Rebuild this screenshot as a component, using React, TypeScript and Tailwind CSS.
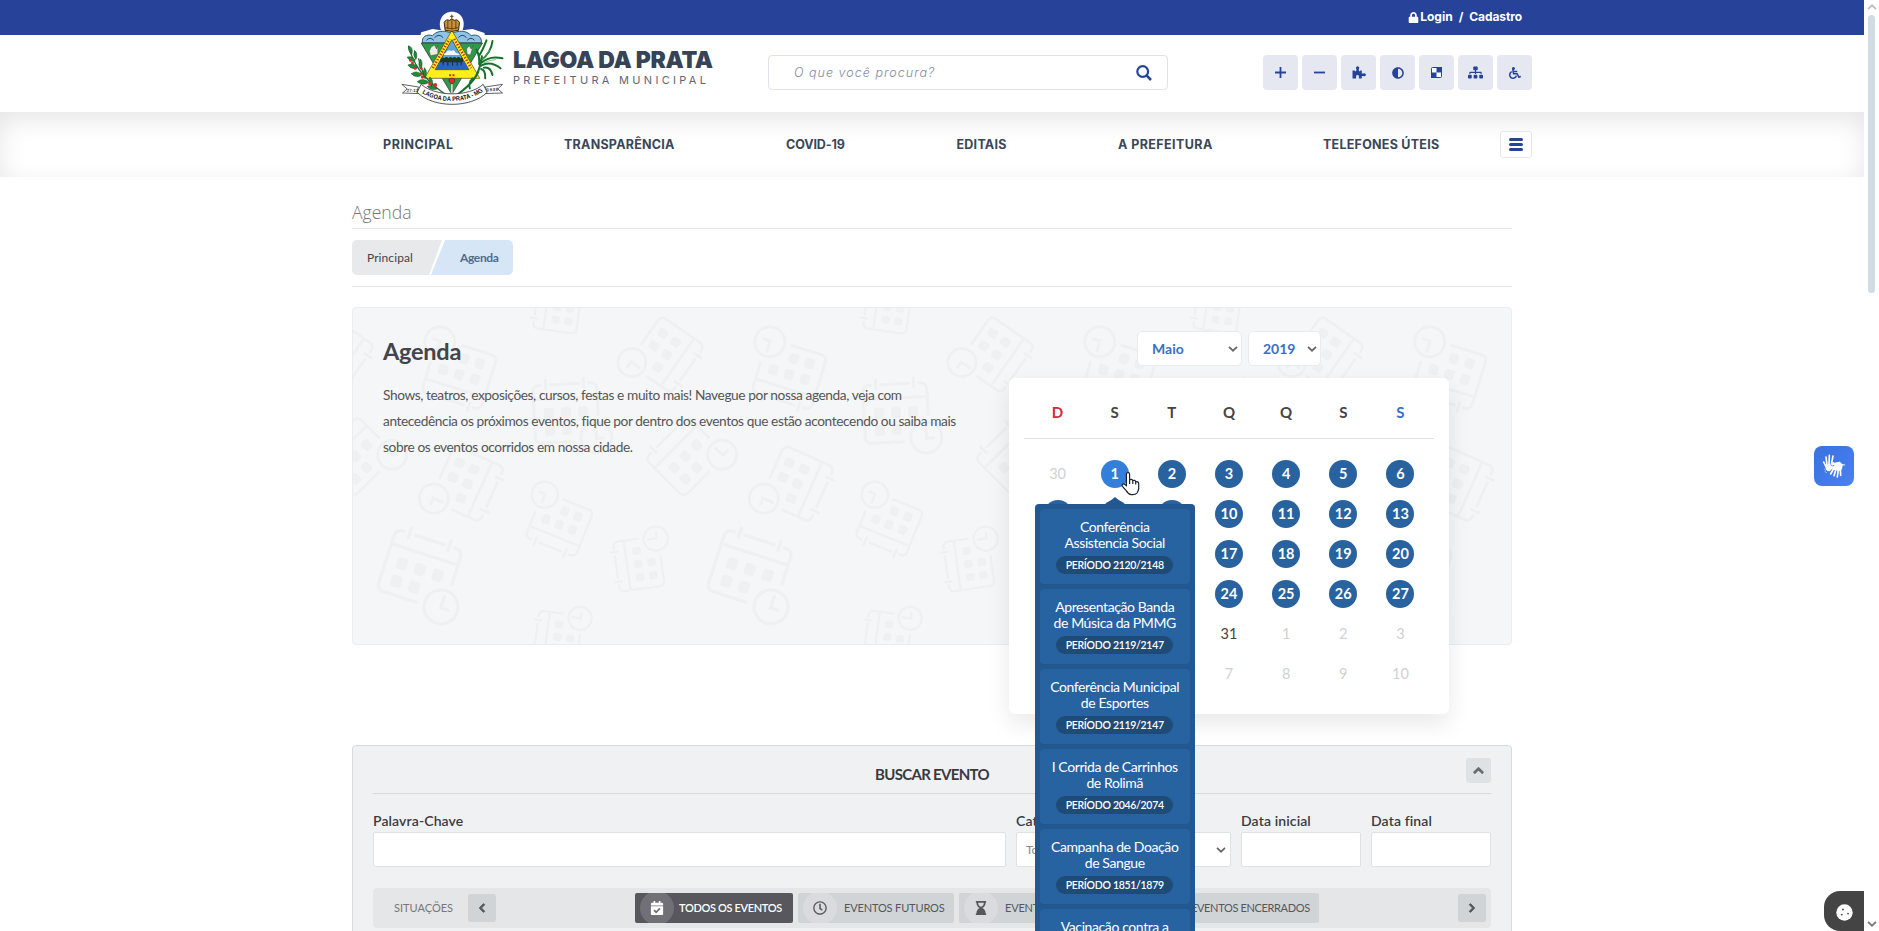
import React from 'react';
import { FaLock, FaAdjust, FaSitemap, FaWheelchair, FaChevronLeft, FaChevronRight, FaChevronUp, FaRegClock, FaHourglassEnd, FaHourglassHalf, FaCalendarCheck } from 'react-icons/fa';

function Crest() {
  return (
    <svg className="block h-[94px] w-[103px]" viewBox="186 34 308 282">
      <path d="M338 36 C365 36 382 62 370 92 L400 88 L436 100 L440 130 L440 200 L240 200 L238 130 L246 98 L280 88 L306 92 C294 62 312 36 338 36Z" fill="#fff" />
      <path d="M250 130 C246 112 262 102 280 108 C292 94 312 92 330 98 L346 98 C366 92 384 94 396 108 C414 102 430 112 426 130Z" fill="#8fc4e6" stroke="#33566f" strokeWidth="3" />
      <path d="M262 122 q10 -12 22 0 m2 -8 q14 -14 26 0 m94 8 q-10 -12 -22 0 m-2 -8 q-14 -14 -24 0" fill="none" stroke="#23485f" strokeWidth="3" />
      <path d="M246 130 L430 130 L338 284Z" fill="#2f9a48" stroke="#222" strokeWidth="2" />
      <path d="M276 142 l10 -6 6 12 4 -10 v26 l-22 4 -4 -14Z M382 148 l8 -10 6 10 6 -10 -8 28 -10 -2Z" fill="#e8eee4" stroke="#444" strokeWidth="1.5" />
      <path d="M338 92 L256 236 L422 236Z" fill="#fdf018" stroke="#4a4410" strokeWidth="2" />
      <path d="M338 120 L288 210 L389 210Z" fill="#5da4dc" stroke="#222" strokeWidth="2" />
      <path d="M320 160 q6 -12 16 -6 q10 -6 14 6 q10 0 12 6 h-48 q0 -6 6 -6Z" fill="#f2f8fb" />
      <path d="M302 186 L376 186 L388 209 L290 209Z" fill="#2b62c0" />
      <path d="M304 178 q6 -8 12 -2 q6 -8 12 0 q6 -8 12 0 q6 -8 12 0 q6 -8 12 0 q6 -6 8 4 v8 h-70Z" fill="#1e3a22" />
      <path d="M312 186 v10 m14 -10 v12 m14 -12 v12 m14 -12 v12 m12 -12 v10" stroke="#15241a" strokeWidth="2.5" />
      <path d="M281 205 L331 118 M345 118 L396 205" stroke="#cf2a22" strokeWidth="8" strokeDasharray="4 5" fill="none" />
      <path d="M330 227 h6 m4 0 h6" stroke="#cf2a22" strokeWidth="6" />
      <path d="M330 238 q8 -6 16 0 q4 8 -8 16 q-12 -8 -8 -16Z" fill="#df2b2b" stroke="#333" strokeWidth="2" />
      <path d="M338 254 V282" stroke="#d8d8d8" strokeWidth="5" />
      <path d="M338 45 v12 m-5 -7 h10" stroke="#5a3d0a" strokeWidth="3" />
      <path d="M318 92 L315 68 q6 -12 16 -6 q7 -8 14 0 q10 -6 16 6 L358 92 q-20 6 -40 0Z" fill="#c8923a" stroke="#3a260a" strokeWidth="3" />
      <path d="M326 64 v24 m12 -26 v28 m12 -26 v24 M318 84 q20 6 40 0" stroke="#5a3512" strokeWidth="2.5" fill="none" />
      <path d="M208 140 C222 190 244 230 318 284 M238 176 C244 200 250 220 262 236" fill="none" stroke="#176b2c" strokeWidth="4" />
      <path d="M208 138 q16 6 10 26 q-12 -8 -10 -26Z M204 172 q20 -4 24 12 q-16 4 -24 -12Z M226 152 q12 10 4 28 q-10 -12 -4 -28Z M206 196 q20 -8 30 8 q-18 8 -30 -8Z M244 178 q10 14 0 30 q-10 -14 0 -30Z M216 222 q18 -12 32 4 q-16 12 -32 -4Z M256 204 q12 14 0 30 q-8 -14 0 -30Z M234 246 q18 -14 36 2 q-18 12 -36 -2Z M272 232 q14 12 6 28 q-12 -10 -6 -28Z M264 260 q18 -8 30 8 q-18 6 -30 -8Z" fill="#1f8a3a" stroke="#0e4d1e" strokeWidth="1.5" />
      <g fill="#d92a2a">
        <circle cx="214" cy="182" r="4.5" /><circle cx="220" cy="190" r="4.5" /><circle cx="228" cy="206" r="4.5" /><circle cx="246" cy="206" r="4" /><circle cx="250" cy="232" r="5" /><circle cx="246" cy="222" r="4" /><circle cx="272" cy="252" r="5" /><circle cx="288" cy="256" r="6" />
      </g>
      <path d="M442 122 q-12 30 -22 46 M460 124 q-4 34 -34 58 M490 176 q-40 -10 -66 16 M484 206 q-30 -24 -58 -8 M460 226 q-6 -26 -26 -22 M438 236 q2 -24 -12 -28 M412 150 q10 18 8 44 M428 170 C420 230 400 250 356 284 M400 236 q-14 18 -8 30 M420 206 q-6 30 -26 38" fill="none" stroke="#15712c" strokeWidth="6" strokeLinecap="round" />
      <path d="M452 150 q-12 20 -24 30 M470 180 q-20 0 -36 10" fill="none" stroke="#5dbb5b" strokeWidth="2.5" />
      <path d="M188 254 L238 262 L234 274 L246 282 L190 280 L204 268Z M490 254 L438 262 L444 274 L430 282 L490 280 L476 268Z" fill="#fff" stroke="#444" strokeWidth="2.5" />
      <path d="M246 254 C290 292 390 292 432 254 L444 278 C396 326 282 326 234 278Z" fill="#fff" stroke="#333" strokeWidth="2.5" />
      <path id="motto" d="M244 276 C292 314 386 314 436 272" fill="none" />
      <text className="font-['Liberation_Sans'] text-[19px] font-bold" fill="#111">
        <textPath href="#motto" startOffset="6" textLength="194" lengthAdjust="spacingAndGlyphs">LAGOA DA PRATA - MG</textPath>
      </text>
      <text x="203" y="276" textLength="34" transform="rotate(3 203 276)" className="font-['Liberation_Sans'] text-[13px] font-bold" fill="#333">27-12</text>
      <text x="443" y="275" textLength="34" transform="rotate(-3 443 275)" className="font-['Liberation_Sans'] text-[13px] font-bold" fill="#333">1938</text>
    </svg>
  );
}

function Doodle({ x, y, w, r }: { x: number; y: number; w: number; r: number }) {
  return (
    <g transform={`translate(${x} ${y}) rotate(${r}) scale(${w / 64})`} fill="none" stroke="#eff0f2" strokeWidth="3" strokeLinecap="round">
      <path d="M32 4 V-22 a6 6 0 0 0 -6 -6 H24 M14 -28 H-14 M-24 -28 H-26 a6 6 0 0 0 -6 6 V24 a6 6 0 0 0 6 6 H6 M-32 -14 H32 M-19 -33 v9 M19 -33 v9" />
      <g fill="#eff0f2" stroke="none">
        <rect x="-22" y="-5" width="10" height="11" rx="3" /><rect x="-5" y="-5" width="10" height="11" rx="3" /><rect x="12" y="-5" width="10" height="11" rx="3" />
        <rect x="-22" y="12" width="10" height="11" rx="3" /><rect x="-5" y="12" width="10" height="11" rx="3" />
      </g>
      <circle cx="29" cy="27" r="15.5" />
      <path d="M29 17 V28 H36" />
    </g>
  );
}

const doodles = [
  { x: 106, y: 67, w: 62, r: 197 },
  { x: 204, y: 329, w: 48, r: -82 },
  { x: 204, y: -1, w: 48, r: -82 },
  { x: 314, y: 47, w: 58, r: 125 },
  { x: -16, y: 47, w: 58, r: 125 },
  { x: 213, y: 104, w: 64, r: -3 },
  { x: 332, y: 148, w: 60, r: -45 },
  { x: 2, y: 148, w: 60, r: -45 },
  { x: 115, y: 176, w: 60, r: 114 },
  { x: 206, y: 217, w: 54, r: 202 },
  { x: 285, y: 256, w: 50, r: -98 },
  { x: 67, y: 261, w: 70, r: 18 },
];

function Pattern() {
  return (
    <svg className="absolute inset-0 h-full w-full">
      <defs>
        <pattern id="agenda-tile" width="330" height="330" patternUnits="userSpaceOnUse">
          {doodles.map((d, i) => <Doodle key={i} {...d} />)}
        </pattern>
      </defs>
      <rect width="100%" height="100%" fill="url(#agenda-tile)" />
    </svg>
  );
}

function Caret({ className = 'text-[#666]' }: { className?: string }) {
  return (
    <svg className={`h-[6px] w-[10px] ${className}`} viewBox="0 0 10 6" fill="none" stroke="currentColor" strokeWidth="1.7">
      <path d="M1 .8 L5 4.7 L9 .8" />
    </svg>
  );
}

function Hands() {
  return (
    <svg className="h-10 w-10" viewBox="0 0 120 120" fill="none" stroke="#fff" strokeLinecap="round" strokeLinejoin="round">
      <path d="M36 62 L29 48 M39 58 L36 33 M45 56 L46 28 M52 56 L57 30" strokeWidth="5" />
      <path d="M36 60 L50 56 L58 50 L54 66 L46 74 Q36 74 36 60Z" fill="#fff" strokeWidth="4" />
      <path d="M34 77 l3 3 M32 70 l2 2" strokeWidth="2.5" />
      <path d="M60 66 L50 84 M66 70 L60 89 M73 70 L70 93 M79 68 L80 88" strokeWidth="5" />
      <path d="M50 58 L62 52 L76 49 L84 56 Q84 68 78 72 L60 70Z" fill="#fff" strokeWidth="4" />
      <path d="M84 56 L92 57 M56 62 L50 66" strokeWidth="3" />
      <path d="M50 57 Q56 62 60 59" stroke="#3d76e4" strokeWidth="2.5" />
    </svg>
  );
}

const tools = [
  <svg key="p" className="h-[11px] w-[11px]" viewBox="0 0 11 11" stroke="currentColor" strokeWidth="1.8"><path d="M5.5 0V11M0 5.5H11" /></svg>,
  <svg key="m" className="h-[11px] w-[11px]" viewBox="0 0 11 11" stroke="currentColor" strokeWidth="1.8"><path d="M0 5.5H11" /></svg>,
  <svg key="z" className="h-[13px] w-[14px]" viewBox="0 0 14 13" fill="currentColor"><path d="M0.5 4.6H2.6L3.4 5.4L4.4 4.4V3A1.6 1.6 0 1 1 6.8 3V4.4L7.6 5.4L8.4 4.6H9.8V7.6H11.4A1.5 1.5 0 1 1 11.4 10H9.8V12.5H6.9V10.5A1.4 1.4 0 0 0 4.1 10.5V12.5H.5Z" /></svg>,
  <FaAdjust key="a" size={12} />,
  <svg key="c" className="h-[11px] w-[11px]" viewBox="0 0 11 11"><rect x=".5" y=".5" width="10" height="10" rx="1" fill="#fff" stroke="currentColor" /><path d="M5.5 0H11V5.5H5.5ZM0 5.5H5.5V11H0Z" fill="currentColor" /></svg>,
  <FaSitemap key="s" size={15} />,
  <FaWheelchair key="w" size={12} />,
];

const nav = [
  { t: 'PRINCIPAL', c: 'w-[181px] tracking-[0.55px]' },
  { t: 'TRANSPARÊNCIA', c: 'w-[222px] tracking-[0.25px]' },
  { t: 'COVID-19', c: 'w-[170.5px] tracking-[-0.1px]' },
  { t: 'EDITAIS', c: 'w-[161.5px] tracking-[0.25px]' },
  { t: 'A PREFEITURA', c: 'w-[205px] tracking-[0.42px]' },
  { t: 'TELEFONES ÚTEIS', c: 'w-[176px] tracking-[0.25px]' },
];

const events = [
  ['Conferência', 'Assistencia Social', '2120/2148'],
  ['Apresentação Banda', 'de Música da PMMG', '2119/2147'],
  ['Conferência Municipal', 'de Esportes', '2119/2147'],
  ['I Corrida de Carrinhos', 'de Rolimã', '2046/2074'],
  ['Campanha de Doação', 'de Sangue', '1851/1879'],
  ['Vacinação contra a', 'Gripe', '1851/1879'],
];

const days: { n: number; k: 'out' | 'in' | 'ev' | 'hot' }[] = Array.from({ length: 42 }, (_, i) => {
  if (i === 0) return { n: 30, k: 'out' };
  if (i === 1) return { n: 1, k: 'hot' };
  if (i <= 28) return { n: i, k: 'ev' };
  if (i <= 31) return { n: i, k: 'in' };
  return { n: i - 31, k: 'out' };
});

const dayClass = {
  out: 'text-[#cfd1d3]',
  in: 'text-[#444]',
  ev: 'bg-[#28629f] font-bold text-white',
  hot: 'bg-[#347fd9] font-bold text-white',
};

function EventPopup() {
  return (
    <div className="absolute top-[44px] left-1/2 z-20 w-[160px] -translate-x-1/2">
      <svg className="absolute -top-[7px] left-[70px] h-[8px] w-[20px]" viewBox="0 0 20 8"><path d="M0 8 L10 0 L20 8Z" fill="#22588f" /></svg>
      <div className="flex flex-col gap-[5px] rounded-[4px] bg-[#22588f] p-[5px]">
        {events.map(([a, b, p], i) => (
          <div key={i} className="flex h-[75px] flex-col items-center rounded-[4px] bg-[#2863a1] pt-[10px] text-[14px] leading-[16px] whitespace-nowrap text-white">
            <span className="tracking-[-0.4px]">{a}</span>
            <span className="tracking-[-0.4px]">{b}</span>
            <span className="mt-[5px] flex h-[18px] w-[117px] items-center justify-center rounded-full bg-[#1f4b78] text-[10.5px] font-semibold tracking-[-0.3px]">PERÍODO {p}</span>
          </div>
        ))}
      </div>
    </div>
  );
}

function Calendar() {
  return (
    <div className="relative h-[336px] w-[440px] shrink-0 rounded-[6px] bg-white px-[15px] shadow-[0_10px_25px_rgba(0,0,0,0.09)]">
      <div className="grid h-[61px] grid-cols-7 border-b border-[#dfe1e3] px-[5px] pt-2 text-[15px] font-bold text-[#444]">
        {['D', 'S', 'T', 'Q', 'Q', 'S', 'S'].map((d, i) => (
          <span key={i} className={`flex items-center justify-center ${i === 0 ? 'text-[#d62c3a]' : i === 6 ? 'text-[#3a70c4]' : ''}`}>{d}</span>
        ))}
      </div>
      <div className="mt-[15px] grid grid-cols-7 px-[5px] text-[14.5px]">
        {days.map((d, i) => (
          <div key={i} className="flex h-[40px] items-center justify-center">
            <span className={`relative flex h-7 w-7 items-center justify-center rounded-full ${dayClass[d.k]}`}>
              {d.n}
              {d.k === 'hot' && (
                <>
                  <div className="absolute top-0 left-0 h-0 w-full font-normal"><EventPopup /></div>
                  <svg className="absolute top-[11px] left-[20px] z-30 h-[26px] w-[20px]" viewBox="0 0 20 26">
                    <path d="M6.2 1.8 C7.6 1.2 8.6 2 8.6 3.4 V9 C9.5 8 11.3 8.3 11.8 9.6 C13 8.9 14.4 9.4 14.7 10.7 C16.2 10.2 17.7 11 17.7 12.6 V17.5 C17.7 19.5 16.5 21 16 22 C14.8 23.6 12.4 23.8 10.2 23.6 C7.4 23.4 6.2 21.4 5.2 19.6 L1.4 15.4 C.6 14 1.8 12.4 3.4 13.2 L5.4 14.6 V3.2 C5.4 2.4 5.6 2 6.2 1.8Z" fill="#fff" stroke="#1c2230" strokeWidth="1.2" />
                    <path d="M8.6 8.5 V13 M11.8 9.6 V13 M14.7 10.7 V13.6" stroke="#1c2230" strokeWidth="1.2" />
                  </svg>
                </>
              )}
            </span>
          </div>
        ))}
      </div>
    </div>
  );
}

const status = [
  { t: 'TODOS OS EVENTOS', w: 'w-[158px] tracking-[-0.35px]', i: <FaCalendarCheck size={14} />, on: true },
  { t: 'EVENTOS FUTUROS', w: 'w-[156px] tracking-[-0.15px]', i: <FaRegClock size={14} />, on: false },
  { t: 'EVENTOS ACONTECENDO', w: 'w-[181px] tracking-[-0.2px]', i: <FaHourglassEnd size={14} />, on: false },
  { t: 'EVENTOS ENCERRADOS', w: 'w-[174px] tracking-[-0.35px]', i: <FaHourglassHalf size={14} />, on: false },
];

function Field({ label, w, children }: { label: string; w: string; children?: React.ReactNode }) {
  return (
    <div className={w}>
      <div className="h-[20px] text-[14px] leading-[17px] font-semibold tracking-[0.12px] whitespace-nowrap text-[#3a3b3e]">{label}</div>
      <div className="flex h-[35px] items-center justify-between rounded-[2px] border border-[#e0e1e3] bg-white pr-1 pl-[9px] text-[12px] text-[#888]">{children}</div>
    </div>
  );
}

export default function App() {
  return (
    <div className="flex h-[931px] w-full overflow-hidden bg-white font-['Lato',sans-serif] text-[#444]">
      <div className="relative h-[931px] min-w-0 flex-1 overflow-hidden">
        <header className="font-['Inter',sans-serif]">
          <div className="h-[35px] bg-[#274399]">
            <div className="mx-auto flex h-[34px] w-[1200px] items-center justify-end pr-[10px] text-[12px] leading-none font-bold text-white">
              <FaLock size={11} className="mr-px" />
              <span>Login</span>
              <span className="mx-[6px]">/</span>
              <span className="tracking-[-0.1px]">Cadastro</span>
            </div>
          </div>
          <div className="mx-auto flex h-[77px] w-[1200px]">
            <div className="flex w-[436px] pl-[69px]">
              <div className="relative -mt-[24px] h-[94px]"><Crest /></div>
              <div className="pt-[14px] pl-[9px] whitespace-nowrap">
                <div className="text-[23px] leading-[23px] font-black tracking-[-0.3px] text-[#374357]">LAGOA DA PRATA</div>
                <div className="mt-px text-[11px] leading-[14px] tracking-[3.3px] text-[#5c6779]">PREFEITURA MUNICIPAL</div>
              </div>
            </div>
            <div className="mt-5 flex h-[35px] w-[400px] items-center justify-between rounded-[4px] border border-[#dfe2e8] pr-[15px] pl-[25px]">
              <span className="pt-px text-[12.5px] font-light tracking-[1.02px] text-[#8089a5] italic">O que você procura?</span>
              <svg className="h-4 w-4" viewBox="0 0 16 16" fill="none" stroke="#274399"><circle cx="6.7" cy="6.5" r="5.4" strokeWidth="2.2" /><path d="M10.5 10.4 L15 15" strokeWidth="2.6" /></svg>
            </div>
            <div className="mt-5 ml-auto flex h-[35px] gap-1">
              {tools.map((icon, i) => (
                <div key={i} className="flex w-[35px] items-center justify-center rounded-[4px] bg-[#e6e8f1] text-[#274399]">{icon}</div>
              ))}
            </div>
          </div>
          <nav className="h-[65px] shadow-[inset_0_8px_26px_rgba(0,0,0,0.1)]">
            <div className="mx-auto flex h-full w-[1200px] items-center pl-[51px] text-[12.5px] font-bold text-[#3a4658]">
              {nav.map((n) => <span key={n.t} className={`shrink-0 pt-[2px] whitespace-nowrap ${n.c}`}>{n.t}</span>)}
              <div className="ml-auto flex h-[27px] w-8 flex-col items-center justify-center gap-[2px] rounded-[3px] border border-[#e6e7ea] bg-white">
                <i className="h-[3px] w-[14px] rounded-full bg-[#274399]" />
                <i className="h-[3px] w-[14px] rounded-full bg-[#274399]" />
                <i className="h-[3px] w-[14px] rounded-full bg-[#274399]" />
              </div>
            </div>
          </nav>
        </header>

        <main className="mx-auto w-[1160px]">
          <div className="h-[52px] border-b border-[#e6e6e6] pt-[23px] font-['Open_Sans',sans-serif] text-[17.6px] leading-6 font-light text-[#777]">Agenda</div>
          <div className="flex h-[58px] items-center border-b border-[#e6e6e6] text-[12px]">
            <div className="flex h-[35px] w-[90px] items-center rounded-l-[5px] bg-[#e8e9ea] pl-[15px] tracking-[0.08px] text-[#444] [clip-path:polygon(0_0,100%_0,77px_100%,0_100%)]">Principal</div>
            <div className="-ml-[11px] flex h-[35px] w-[82px] items-center rounded-r-[5px] bg-[#d7e6f7] pl-[29px] font-bold tracking-[-0.35px] text-[#4c6a94] [clip-path:polygon(14px_0,100%_0,100%_100%,0_100%)]">Agenda</div>
          </div>

          <section className="relative mt-5 flex h-[338px] rounded-[4px] border border-[#eaecee] bg-[#f4f6f8]">
            <Pattern />
            <div className="relative w-[656px] pl-[30px]">
              <h1 className="pt-[28px] text-[23.5px] leading-[30px] font-bold tracking-[-0.25px] text-[#44444a]">Agenda</h1>
              <p className="pt-[16px] text-[13.7px] leading-[26px] tracking-[-0.4px] whitespace-nowrap text-[#555]">
                Shows, teatros, exposições, cursos, festas e muito mais! Navegue por nossa agenda, veja com<br />
                antecedência os próximos eventos, fique por dentro dos eventos que estão acontecendo ou saiba mais<br />
                sobre os eventos ocorridos em nossa cidade.
              </p>
            </div>
            <div className="relative z-10 flex flex-col pt-[23px]">
              <div className="mb-[12px] flex gap-[6px] pl-[128px] text-[14px] font-bold text-[#3a70c4]">
                <div className="flex h-[35px] w-[105px] items-center justify-between rounded-[5px] border border-[#e9ebed] bg-white pr-[3px] pl-[14px]">Maio<Caret /></div>
                <div className="flex h-[35px] w-[73px] items-center justify-between rounded-[5px] border border-[#e9ebed] bg-white pr-[3px] pl-[14px]">2019<Caret /></div>
              </div>
              <Calendar />
            </div>
          </section>

          <section className="mt-[100px] h-[240px] rounded-[4px] border border-[#d9dadc] bg-[#f0f1f3] px-5">
            <div className="relative flex h-[48px] items-center justify-center border-b border-[#d6d8da] pt-[10px]">
              <h2 className="text-[15px] font-bold tracking-[-0.7px] text-[#3a3a3d]">BUSCAR EVENTO</h2>
              <div className="absolute top-3 right-0 flex h-[25px] w-[25px] items-center justify-center rounded-[3px] bg-[#dfe2e5] text-[#6a6c70]"><FaChevronUp size={11} stroke="currentColor" strokeWidth="50" /></div>
            </div>
            <div className="flex gap-[10px] pt-[18px]">
              <Field label="Palavra-Chave" w="w-[633px]" />
              <Field label="Categoria" w="w-[215px]"><span>Todas</span><Caret /></Field>
              <Field label="Data inicial" w="w-[120px]" />
              <Field label="Data final" w="w-[120px]" />
            </div>
            <div className="mt-[21px] flex h-[40px] items-center rounded-[4px] bg-[#e5e6e8] px-[5px] text-[11px]">
              <span className="w-[90px] pl-4 text-[#777]">SITUAÇÕES</span>
              <div className="flex h-7 w-7 items-center justify-center rounded-[3px] bg-[#d0d4d7] text-[#55575b]"><FaChevronLeft size={10} stroke="currentColor" strokeWidth="50" /></div>
              <div className="ml-[139px] flex gap-[5px]">
                {status.map((s) => (
                  <div key={s.t} className={`flex h-[30px] shrink-0 items-center overflow-hidden rounded-[2px] pl-[5px] whitespace-nowrap ${s.w} ${s.on ? 'bg-[#57575d] font-semibold text-white' : 'bg-[#d0d4d7] text-[#55575b]'}`}>
                    <span className={`flex h-[34px] w-[34px] shrink-0 items-center justify-center rounded-full ${s.on ? 'mr-[5px] bg-[#707076]' : 'mr-[7px] bg-[#d9dbde]'}`}>{s.i}</span>
                    {s.t}
                  </div>
                ))}
              </div>
              <div className="ml-auto flex h-7 w-7 items-center justify-center rounded-[3px] bg-[#d0d4d7] text-[#55575b]"><FaChevronRight size={10} stroke="currentColor" strokeWidth="50" /></div>
            </div>
          </section>
        </main>

        <div className="absolute top-[446px] right-[10px] flex h-10 w-10 items-center justify-center rounded-[8px] bg-linear-to-br from-[#3a72e0] to-[#4a80f0]">
          <Hands />
        </div>
        <div className="absolute right-0 bottom-0 flex h-10 w-10 items-center justify-center rounded-l-[16px] bg-[#444] pt-[2px]">
          <svg className="h-[17px] w-[17px]" viewBox="0 0 17 17"><circle cx="8.5" cy="8.5" r="8.2" fill="#fff" /><g fill="#444"><circle cx="7" cy="5.5" r=".9" /><circle cx="5.8" cy="10.6" r=".9" /><circle cx="12" cy="9.6" r=".9" /></g></svg>
        </div>
      </div>
      <div className="flex h-[931px] w-[15px] flex-col items-center bg-white">
        <Caret className="mt-[4px] rotate-180 text-[#bdbdbd]" />
        <div className="mt-[5px] h-[278px] w-[7px] rounded-full bg-[#d1dbe4]" />
        <Caret className="mt-auto mb-[4px] text-[#777]" />
      </div>
    </div>
  );
}
